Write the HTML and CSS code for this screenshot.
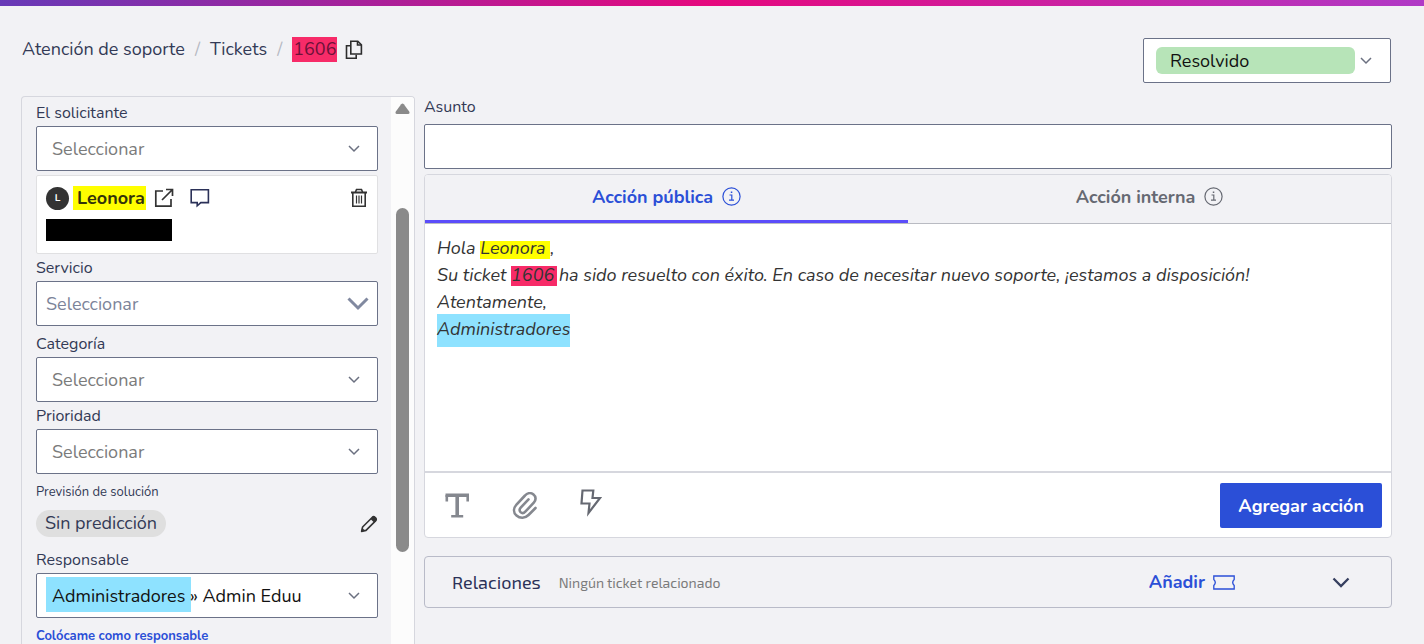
FILE: index.html
```html
<!DOCTYPE html>
<html lang="es">
<head>
  <meta charset="UTF-8">
  <meta name="viewport" content="width=device-width, initial-scale=1.0">
  <title>Ticket 1606</title>
  <link rel="stylesheet" href="styles.css">
</head>
<body>
  <div class="top-bar"></div>

  <header class="header">
    <nav class="breadcrumb">
      <a href="#">Atención de soporte</a>
      <span class="sep">/</span>
      <a href="#">Tickets</a>
      <span class="sep">/</span>
      <span class="ticket-id">1606</span>
      <button class="icon-btn copy" aria-label="Copiar">
        <svg width="18" height="20" viewBox="0 0 18 20" fill="none" stroke="#2d2d2d" stroke-width="1.6"><path d="M5.8 1.2h7l3.6 3.6v9.2H5.8z"/><path d="M12.5 1.500v3.500H16"/><path d="M5 5.800H1.500v12.400h9.700v-3.500"/></svg>
      </button>
    </nav>
    <div class="status">
      <select class="status-select" aria-label="Estado"><option>Resolvido</option></select>
      <svg class="chevron" width="12" height="8" viewBox="0 0 12 8"><path d="M1 1l5 5 5-5"/></svg>
    </div>
  </header>

  <div class="layout">
    <aside class="sidebar">
      <form class="fields">
        <div class="field">
          <label for="solicitante">El solicitante</label>
          <div class="select-box">
            <select id="solicitante"><option>Seleccionar</option></select>
            <svg class="chevron" width="12" height="8" viewBox="0 0 12 8"><path d="M1 1l5 5 5-5"/></svg>
          </div>
        </div>

        <div class="person">
          <div class="person-row">
            <span class="avatar">L</span>
            <strong class="person-name">Leonora</strong>
            <button type="button" class="icon-btn" aria-label="Abrir">
              <svg width="20" height="20" viewBox="0 0 20 20" fill="none" stroke="#333" stroke-width="1.7"><path d="M9 3H1.800v15.200H17V11"/><path d="M8 12L18 2M12 1.500h6.500V8"/></svg>
            </button>
            <button type="button" class="icon-btn chat" aria-label="Mensaje">
              <svg width="20" height="20" viewBox="0 0 20 20" fill="none" stroke="#2b3158" stroke-width="1.6"><path d="M1.200 1.800h17.200v12.800h-7.600l-3.600 3.200v-3.200h-6z"/></svg>
            </button>
            <button type="button" class="icon-btn trash" aria-label="Eliminar">
              <svg width="18" height="20" viewBox="0 0 18 20" fill="none" stroke="#333"><path stroke-width="2" d="M1 4.500h16"/><path stroke-width="1.6" d="M5.500 4l1-2.500h5l1 2.500M2.800 5v13.200h12.400V5"/><path stroke-width="1.2" d="M6.500 7.500v8M9 7.500v8M11.500 7.500v8"/></svg>
            </button>
          </div>
          <div class="redacted"></div>
        </div>

        <div class="field">
          <label for="servicio">Servicio</label>
          <div class="select-box wide">
            <select id="servicio"><option>Seleccionar</option></select>
            <svg class="chevron" width="22" height="14" viewBox="0 0 22 14"><path d="M1.500 1.500l9.500 9.500 9.500-9.500"/></svg>
          </div>
        </div>

        <div class="field spaced">
          <label for="categoria">Categoría</label>
          <div class="select-box">
            <select id="categoria"><option>Seleccionar</option></select>
            <svg class="chevron" width="12" height="8" viewBox="0 0 12 8"><path d="M1 1l5 5 5-5"/></svg>
          </div>
        </div>

        <div class="field">
          <label for="prioridad">Prioridad</label>
          <div class="select-box">
            <select id="prioridad"><option>Seleccionar</option></select>
            <svg class="chevron" width="12" height="8" viewBox="0 0 12 8"><path d="M1 1l5 5 5-5"/></svg>
          </div>
        </div>

        <div class="forecast">
          <span class="forecast-title">Previsión de solución</span>
          <div class="forecast-row">
            <span class="pill">Sin predicción</span>
            <button type="button" class="icon-btn" aria-label="Editar">
              <svg width="18" height="18" viewBox="0 0 18 18"><path fill="none" stroke="#333" stroke-width="1.6" stroke-linejoin="round" d="M1.600 16.400l1-4.400L12.400 2.200q1.200-1 2.400 0l1 1q1 1.200 0 2.400L6 15.400z"/><path fill="#333" d="M10.500 4l2-2q1.500-1.200 3 0l.8.8q1.200 1.500 0 3l-2 2z"/><path fill="#333" d="M1.200 16.800l.9-4 3 3z"/></svg>
            </button>
          </div>
        </div>

        <div class="field">
          <label for="responsable">Responsable</label>
          <div class="select-box owner">
            <select id="responsable"><option>Administradores » Admin Eduu</option></select>
            <svg class="chevron" width="12" height="8" viewBox="0 0 12 8"><path d="M1 1l5 5 5-5"/></svg>
          </div>
        </div>
        <a class="assign" href="#">Colócame como responsable</a>
      </form>
      <div class="scroll-track">
        <svg width="15" height="12" viewBox="0 0 15 12"><path fill="#8a8a8a" d="M6.200 1.200q1.300-1.400 2.600 0l5.400 7.300q1 2.300-1.200 2.500H2q-2.200-.2-1.200-2.500z"/></svg>
        <div class="scroll-thumb"></div>
      </div>
    </aside>

    <main class="content">
      <label class="subject-label" for="asunto">Asunto</label>
      <input class="subject" type="text" id="asunto">

      <section class="editor">
        <div class="tabs">
          <button class="tab active">Acción pública
            <svg width="19" height="19" viewBox="0 0 19 19" fill="none" stroke="currentColor" stroke-width="1.2"><circle cx="9.5" cy="9.5" r="8.6"/><path d="M7.500 8h2.300v5M7 13.200h5"/><path stroke-width="1.6" d="M8.800 5.300h1.500"/></svg>
          </button>
          <button class="tab">Acción interna
            <svg width="19" height="19" viewBox="0 0 19 19" fill="none" stroke="currentColor" stroke-width="1.2"><circle cx="9.5" cy="9.5" r="8.6"/><path d="M7.500 8h2.300v5M7 13.200h5"/><path stroke-width="1.6" d="M8.800 5.300h1.500"/></svg>
          </button>
        </div>
        <div class="message" contenteditable="true" role="textbox" aria-label="Mensaje" spellcheck="false">
          <div>Hola <mark class="yellow">Leonora&nbsp;</mark>,</div>
          <div>Su ticket <mark class="pink">1606</mark> ha sido resuelto con éxito. En caso de necesitar nuevo soporte, ¡estamos a disposición!</div>
          <div>Atentamente,</div>
          <div><mark class="blue">Administradores</mark></div>
        </div>
        <div class="toolbar">
          <button class="icon-btn" aria-label="Texto">
            <svg width="25" height="26" viewBox="0 0 25 26" fill="none" stroke="#85888f"><path stroke-width="3.6" d="M.5 2.300h23.500M12.200 2v22"/><path stroke-width="2.6" d="M1.800 2v6.500M22.700 2v6.500M6.200 23.300h12"/></svg>
          </button>
          <button class="icon-btn" aria-label="Adjuntar">
            <svg width="26" height="28" viewBox="0 0 26 28" fill="none" stroke="#85888f" stroke-width="2.6" stroke-linecap="round"><path d="M23.500 16l-7 7c-3.500 3.500-8.500 3.500-12 .5s-3-7.500 0-11l8.500-9c2.500-2.800 6-3 8.500-1s2.800 5.500.3 8.200l-8.500 9c-1.500 1.600-3.500 1.600-4.800.4s-1.200-3 .2-4.500l7.800-8.200"/></svg>
          </button>
          <button class="icon-btn bolt" aria-label="Macros">
            <svg width="22" height="28" viewBox="0 0 22 28" fill="none" stroke="#666972" stroke-width="2.2"><path d="M2.500 1.500h10.800l-.8 7.500h7.500L8.500 24l1-9.500H1.500z"/></svg>
          </button>
          <button class="btn-primary">Agregar acción</button>
        </div>
      </section>

      <section class="relations">
        <h2>Relaciones</h2>
        <span class="relations-note">Ningún ticket relacionado</span>
        <button class="add">Añadir
          <svg width="22" height="15" viewBox="0 0 22 15" fill="none" stroke="currentColor" stroke-width="1.3"><path d="M.8 1h20.400v3.500q-3 3 0 6V14H.8v-3.500q3-3 0-6z"/></svg>
        </button>
        <button class="icon-btn" aria-label="Desplegar">
          <svg width="18" height="11" viewBox="0 0 18 11" fill="none" stroke="#363f5f" stroke-width="2.3"><path d="M1.500 1.500L9 9l7.500-7.500"/></svg>
        </button>
      </section>
    </main>
  </div>
</body>
</html>
```

FILE: styles.css
```css
* {
  box-sizing: border-box;
}

body {
  margin: 0;
  height: 100vh;
  overflow: hidden;
  display: flex;
  flex-direction: column;
  background: #f2f2f5;
  color: #333a56;
  font-family: Nunito, "Open Sans", sans-serif;
  font-size: 18px;
}

button,
input,
select {
  font: inherit;
}

a {
  color: inherit;
  text-decoration: none;
}

select {
  appearance: none;
  cursor: pointer;
}

.icon-btn {
  display: flex;
  padding: 0;
  border: none;
  background: none;
  cursor: pointer;
}

.top-bar {
  flex: none;
  height: 6px;
  background: linear-gradient(to right, #673ab7, #e6097e 50%, #b03ac6);
}

/* header */
.header {
  flex: none;
  display: flex;
  justify-content: space-between;
  align-items: flex-start;
  padding: 30px 33px 13px 22px;
}

.breadcrumb {
  display: flex;
  align-items: center;
  gap: 10px;
  line-height: 27px;
}

.sep {
  color: #b5b8c2;
}

.ticket-id {
  padding: 0 1px;
  background: #f72b68;
  color: #6c1138;
  line-height: 25px;
}

.copy {
  margin-left: -2px;
}

.status {
  position: relative;
  width: 248px;
  margin-top: 2px;
  padding: 8px 35px 8px 12px;
  border: 1px solid #6b7288;
  border-radius: 2px;
  background: #fff;
}

.status-select {
  display: block;
  width: 100%;
  height: 27px;
  padding: 0 14px;
  border: none;
  border-radius: 6px;
  background: #b7e4b8;
  color: #111;
}

.chevron {
  position: absolute;
  top: 50%;
  right: 18px;
  transform: translateY(-50%);
  pointer-events: none;
  fill: none;
  stroke: #6b7080;
  stroke-width: 1.5;
}

/* layout */
.layout {
  flex: 1;
  min-height: 0;
  display: flex;
  gap: 9px;
  padding: 0 32px 0 21px;
}

.sidebar {
  flex: none;
  width: 394px;
  display: flex;
  overflow: hidden;
  border: 1px solid #d6d7de;
  border-bottom: none;
  border-radius: 4px 4px 0 0;
}

.fields {
  flex: 1;
  padding: 5px 13px 0 14px;
}

.field {
  margin-bottom: 3px;
}

.field.spaced {
  margin-top: 7px;
}

.field label,
.subject-label {
  display: block;
  font-size: 16px;
  line-height: 22px;
}

.field label {
  margin-bottom: 2px;
}

.select-box {
  position: relative;
}

.select-box select {
  display: block;
  width: 100%;
  height: 45px;
  padding: 0 40px 0 15px;
  border: 1px solid #6b7288;
  border-radius: 2px;
  background: #fff;
  color: #7b7b7b;
}

.select-box.wide select {
  padding-left: 9px;
  color: #7c8499;
}

.select-box.wide .chevron {
  right: 9px;
  stroke: #8189a0;
  stroke-width: 3;
}

.select-box.owner select {
  background: linear-gradient(#8ee2ff, #8ee2ff) 9px 3px / 145px 35px no-repeat #fff;
  color: #111;
}

.person {
  height: 79px;
  margin: 4px 0 3px;
  padding: 10px 9px 0;
  border: 1px solid #e0e0e2;
  border-radius: 2px;
  background: #fff;
}

.person-row {
  display: flex;
  align-items: center;
}

.avatar {
  width: 23px;
  height: 23px;
  margin-right: 4px;
  border-radius: 50%;
  background: #333;
  color: #fff;
  font-size: 10px;
  font-weight: 700;
  line-height: 23px;
  text-align: center;
}

.person-name {
  margin-right: 8px;
  padding: 0 1px 0 4px;
  background: #ff0;
  color: #33330a;
  line-height: 24px;
}

.chat {
  margin-left: 16px;
}

.trash {
  margin-left: auto;
}

.redacted {
  width: 126px;
  height: 22px;
  margin-top: 9px;
  background: #000;
}

.forecast {
  margin: 7px 0 12px;
}

.forecast-title {
  display: block;
  font-size: 13px;
  line-height: 22px;
}

.forecast-row {
  display: flex;
  align-items: center;
  justify-content: space-between;
  margin-top: 7px;
}

.pill {
  padding: 0 9px;
  border-radius: 14px;
  background: #dfdfdf;
  line-height: 27px;
}

.assign {
  display: block;
  margin-top: 7px;
  color: #2b4fd7;
  font-size: 13px;
  font-weight: 700;
  line-height: 22px;
}

.scroll-track {
  flex: none;
  width: 23px;
  padding-top: 6px;
  background: #fcfcfc;
  text-align: center;
  line-height: 12px;
}

.scroll-thumb {
  width: 13px;
  height: 344px;
  margin: 93px auto 0;
  border-radius: 7px;
  background: #8a8a8a;
}

/* content */
.content {
  flex: 1;
  min-width: 0;
}

.subject {
  display: block;
  width: 100%;
  height: 45px;
  margin: 6px 0 5px;
  padding: 0 12px;
  border: 1px solid #6b7288;
  border-radius: 2px;
  background: #fff;
}

.editor {
  border: 1px solid #d6d7de;
  border-radius: 4px;
  background: #fff;
  overflow: hidden;
}

.tabs {
  display: flex;
  background: #f2f2f5;
  border-bottom: 1px solid #b9bbc2;
}

.tab {
  flex: 1;
  display: flex;
  justify-content: center;
  align-items: center;
  gap: 9px;
  height: 48px;
  padding: 0 0 2px;
  border: none;
  border-bottom: 3px solid transparent;
  background: none;
  color: #666972;
  font-weight: 700;
  cursor: pointer;
}

.tab.active {
  border-bottom-color: #5b4dfa;
  color: #2b4fd7;
}

.message {
  min-height: 247px;
  padding: 11px 12px;
  color: #333;
  font-style: italic;
  line-height: 27px;
  outline: none;
}

mark {
  display: inline-block;
  color: inherit;
}

mark.yellow {
  padding-bottom: 4px;
  background: #ff0;
  line-height: 14px;
}

mark.pink {
  margin-right: -3px;
  padding: 0 3px 2px 0;
  background: #f72b68;
  line-height: 18px;
}

mark.blue {
  margin-top: -2px;
  padding: 2px 0 4px;
  background: #8ee2ff;
}

.toolbar {
  display: flex;
  align-items: center;
  gap: 42px;
  padding: 10px 9px 9px 20px;
  border-top: 2px solid #d6d7de;
}

.bolt {
  align-self: flex-start;
  margin-top: 6px;
}

.btn-primary {
  height: 45px;
  margin-left: auto;
  padding: 0 18px;
  border: none;
  border-radius: 2px;
  background: #2b4fd7;
  color: #fff;
  font-weight: 700;
  cursor: pointer;
}

.relations {
  display: flex;
  align-items: center;
  height: 52px;
  margin-top: 18px;
  padding: 0 41px 0 27px;
  border: 1px solid #b9bbc8;
  border-radius: 4px;
}

.relations h2,
.relations-note {
  font-family: "Exo 2", Nunito, "Open Sans", sans-serif;
}

.relations h2 {
  margin: 0 18px 0 0;
  color: #2b3158;
  font-size: 18px;
  font-weight: 400;
}

.relations-note {
  color: #7b7b7b;
  font-size: 14px;
}

.add {
  display: flex;
  align-items: center;
  gap: 8px;
  margin: 0 97px 0 auto;
  padding: 0;
  border: none;
  background: none;
  color: #2b4fd7;
  font-weight: 700;
  cursor: pointer;
}
```
